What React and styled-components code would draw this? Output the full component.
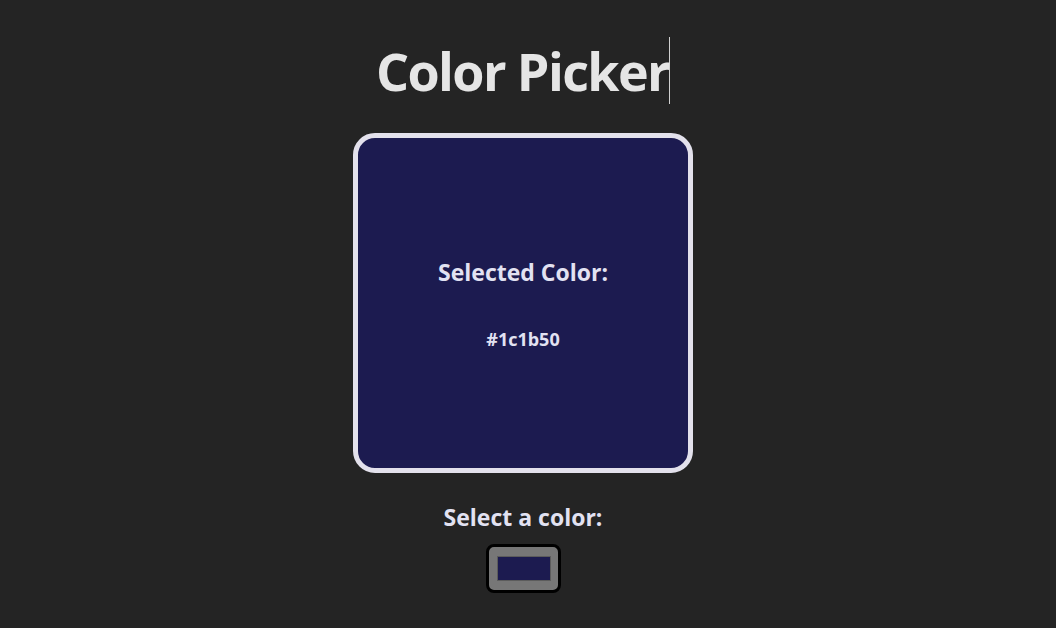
import { useState } from "react"
import styled, { createGlobalStyle } from "styled-components"

const GlobalStyle = createGlobalStyle`
  html, body {
    margin: 0;
    padding: 0;
    background: #242424;
  }
  body {
    font-family: "Open Sans", "Noto Sans", "Liberation Sans", sans-serif;
    color: #e6e6e6;
  }
`

const App = () => {
  const [color, setColor] = useState("#1c1b50")

  return (
    <>
      <GlobalStyle />
      <StyledPage>
        <StyledTitle>Color Picker</StyledTitle>
        <StyledPreview color={color}>
          <h2>Selected Color:</h2>
          <p>{color}</p>
        </StyledPreview>
        <StyledPicker>
          <label htmlFor="color">Select a color:</label>
          <input
            id="color"
            type="color"
            value={color}
            onChange={e => setColor(e.target.value)}
          />
        </StyledPicker>
      </StyledPage>
    </>
  )
}

export default App

const StyledPage = styled.div`
  display: flex;
  flex-direction: column;
  align-items: center;
  padding: 37px 10px 0 0;
`

const StyledTitle = styled.h1`
  margin: 0 0 29px 0;
  font-size: 52px;
  line-height: 67px;
  font-weight: 700;
  color: #e5e5e5;
  border-right: 1px solid #d0d0d0;
  letter-spacing: -1.6px;
`

const StyledPreview = styled.div`
  box-sizing: border-box;
  width: 340px;
  height: 340px;
  border: 5px solid #e3e1ec;
  border-radius: 22px;
  background: ${props => props.color};
  display: flex;
  flex-direction: column;
  align-items: center;
  justify-content: center;
  padding-top: 1px;
  color: #e2e2f2;
  h2 {
    margin: 0;
    font-size: 23px;
    line-height: 28px;
    font-weight: 700;
  }
  p {
    margin: 42px 0 0 0;
    font-size: 18px;
    line-height: 22px;
    font-weight: 700;
  }
`

const StyledPicker = styled.div`
  display: flex;
  flex-direction: column;
  align-items: center;
  margin-top: 31px;
  gap: 13px;
  label {
    font-size: 23px;
    line-height: 27px;
    font-weight: 700;
    color: #e2e2f2;
  }
  input {
    box-sizing: border-box;
    width: 75px;
    height: 49px;
    margin: 0;
    padding: 0;
    border: 3px solid #000;
    border-radius: 8px;
    background: #777;
    cursor: pointer;
    -webkit-appearance: none;
    appearance: none;
  }
  input::-webkit-color-swatch-wrapper {
    padding: 9px 7px 9px 8px;
  }
  input::-webkit-color-swatch {
    border: 1px solid #5c5c5c;
    border-radius: 0;
  }
`
